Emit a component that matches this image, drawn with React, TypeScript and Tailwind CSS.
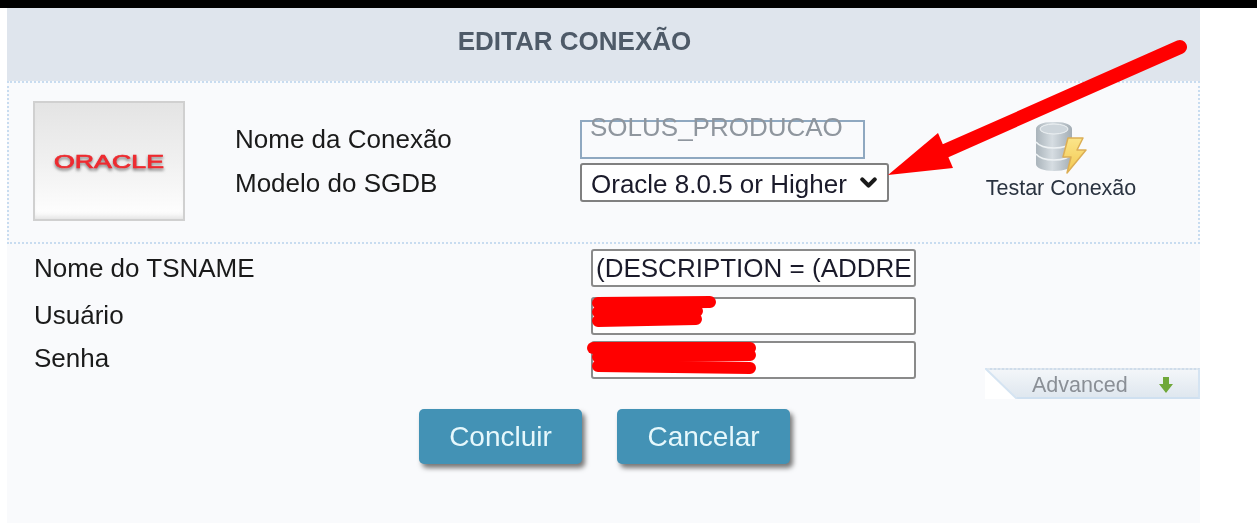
import { ChevronDown } from 'lucide-react';

const labelClass = "text-[26px] leading-[38px] text-[#1a1a1a]";
const fieldClass = "h-[38px] w-[325px] rounded-[3px] border-2 border-[#8a8a8a] bg-white px-[3px] text-[26px] text-[#1a1a2a] outline-none";

function OracleLogo() {
  return (
    <div className="flex h-[120px] w-[152px] shrink-0 items-center justify-center border-2 border-[#d0d0d0] bg-gradient-to-b from-[#e4e4e4] via-[#f0f0f0] to-white shadow-[inset_0_-6px_6px_-4px_#dddddd]">
      <svg className="mt-[4px]" width="116" height="26" viewBox="0 0 116 26">
        <defs>
          <filter id="logoShadow" x="-10%" y="-40%" width="120%" height="200%">
            <feGaussianBlur stdDeviation="1.6" />
          </filter>
        </defs>
        <text x="3" y="20" textLength="110" lengthAdjust="spacingAndGlyphs" fontFamily="'Liberation Sans', sans-serif" fontSize="19" fontWeight="400" stroke="#888888" strokeWidth="1" fill="#888888" filter="url(#logoShadow)">ORACLE</text>
        <text x="3" y="18" textLength="110" lengthAdjust="spacingAndGlyphs" fontFamily="'Liberation Sans', sans-serif" fontSize="19" fontWeight="400" stroke="#ee2b30" strokeWidth="0.7" fill="#ee2b30">ORACLE</text>
      </svg>
    </div>
  );
}

function DbIcon() {
  return (
    <svg width="54" height="54" viewBox="0 0 54 54">
      <defs>
        <linearGradient id="dbBody" x1="0" x2="1" y1="0" y2="0">
          <stop offset="0" stopColor="#aab4bb" />
          <stop offset="0.45" stopColor="#d6dde2" />
          <stop offset="1" stopColor="#a3adb5" />
        </linearGradient>
        <linearGradient id="bolt" x1="0" x2="0" y1="0" y2="1">
          <stop offset="0" stopColor="#fbe58a" />
          <stop offset="1" stopColor="#f3c850" />
        </linearGradient>
      </defs>
      <path d="M2 8c0-4 7-7 15-7h6c8 0 15 3 15 7v35c0 4-7 7-18 7S2 47 2 43z" fill="url(#dbBody)" />
      <ellipse cx="20" cy="8" rx="14" ry="5" fill="#cdd5db" stroke="#eef2f4" strokeWidth="1" />
      <path d="M2 21c4 5 11 6 18 6s14-1 18-6" fill="none" stroke="#eef2f4" strokeWidth="1.5" />
      <path d="M2 33c4 5 11 6 18 6s14-1 18-6" fill="none" stroke="#eef2f4" strokeWidth="1.5" />
      <path d="M34 17h15l-6 12h9L33 52l4-16h-8z" fill="url(#bolt)" stroke="#dcae55" strokeWidth="1.5" strokeLinejoin="round" />
    </svg>
  );
}

function AdvancedTab() {
  return (
    <div className="relative mt-[124px] h-[31px] w-[215px] bg-white">
      <div className="flex h-full items-center gap-[30px] border-t-2 border-r-2 border-b-2 border-r-[#d5e4f2] border-b-[#cfe0f0] border-t-[#cfdcea] border-dotted [border-right-style:solid] [border-bottom-style:solid] bg-gradient-to-b from-[#f3f6f9] to-[#dfe7ef] pt-[3px] pl-[47px] text-[21.5px] text-[#8a8f96] [clip-path:polygon(0_0,100%_0,100%_100%,32px_100%)]">
        <span>Advanced</span>
        <svg width="16" height="18" viewBox="0 0 16 18">
          <path d="M5 1h6v7h4l-7 9-7-9h4z" fill="#6fa83a" />
        </svg>
      </div>
      <svg className="absolute top-0 left-0" width="34" height="31" viewBox="0 0 34 31">
        <path d="M0 0L32 31" stroke="#d5e4f2" strokeWidth="2" />
      </svg>
    </div>
  );
}

export default function App() {
  return (
    <div className="relative h-[523px] w-[1257px] overflow-hidden bg-white font-['Liberation_Sans',Arial,sans-serif] blur-[0.5px]">
      <div className="h-2 bg-black" />
      <div className="ml-[7px] h-[515px] w-[1193px] bg-[#f9fafc]">
        <div className="flex h-[73px] items-center justify-center bg-[#dfe5ed] pr-[58px] pb-[6px] text-[26px] font-bold text-[#4e5a68]">
          EDITAR CONEXÃO
        </div>

        <div className="flex h-[163px] items-start border-2 border-dotted border-[#c8dcf0] pt-[18px] pl-[24px]">
          <OracleLogo />
          <div className="mt-[19px] ml-[50px] flex w-[345px] shrink-0 flex-col gap-[6px]">
            <span className={labelClass}>Nome da Conexão</span>
            <span className={labelClass}>Modelo do SGDB</span>
          </div>
          <div className="mt-[19px] flex w-[309px] shrink-0 flex-col gap-[4px]">
            <div className="h-[39px] w-[285px] border-2 border-[#8fa8c0] px-[8px]">
              <span className="-mt-[10px] block text-[26px] leading-[30px] text-[#8f969e]">SOLUS_PRODUCAO</span>
            </div>
            <div className="relative h-[39px] w-[309px]">
              <select defaultValue="oracle" className="h-full w-full appearance-none rounded-[3px] border-2 border-[#808080] bg-white pl-[9px] text-[26px] text-[#1a1a2a] outline-none">
                <option value="oracle">Oracle 8.0.5 or Higher</option>
              </select>
              <ChevronDown className="absolute top-[7px] right-[8px] h-[25px] w-[25px] text-[#1a1a1a]" strokeWidth={4} />
            </div>
          </div>
          <div className="mt-[20px] ml-[96px] flex w-[152px] shrink-0 flex-col items-center">
            <DbIcon />
            <span className="mt-[1px] text-[21.5px] leading-[24px] whitespace-nowrap text-[#2a3340]">Testar Conexão</span>
          </div>
        </div>

        <div className="flex">
          <div className="flex w-[584px] shrink-0 flex-col pt-[5px] pl-[27px]">
            <span className={labelClass}>Nome do TSNAME</span>
            <span className={`${labelClass} mt-[9px]`}>Usuário</span>
            <span className={`${labelClass} mt-[5px]`}>Senha</span>
          </div>
          <div className="flex w-[394px] shrink-0 flex-col pt-[5px]">
            <input className={fieldClass} defaultValue="(DESCRIPTION = (ADDRE" readOnly />
            <input className={`${fieldClass} mt-[10px]`} readOnly />
            <input className={`${fieldClass} mt-[6px]`} readOnly />
          </div>
          <AdvancedTab />
        </div>

        <div className="-mt-[130px] flex gap-[35px] pt-[140px] pl-[412px]">
          <button className="h-[55px] w-[163px] rounded-[5px] bg-[#4392b5] text-[28px] text-[#e6f8fc] shadow-[3px_4px_5px_#777777]">Concluir</button>
          <button className="h-[55px] w-[173px] rounded-[5px] bg-[#4392b5] text-[28px] text-[#e6f8fc] shadow-[3px_4px_5px_#777777]">Cancelar</button>
        </div>
      </div>

      {/* red marks painted over the screenshot */}
      <svg className="absolute top-0 left-0" width="1257" height="523" viewBox="0 0 1257 523">
        <path d="M1180 47L945 151" stroke="#ff0000" strokeWidth="14" strokeLinecap="round" />
        <path d="M888 175L938 133L953 168z" fill="#ff0000" />
        <g stroke="#ff0000" strokeWidth="12" strokeLinecap="round" fill="none">
          <path d="M598 303L710 302" />
          <path d="M598 312L697 311" />
          <path d="M598 321L696 319" />
          <path d="M593 348L750 348" />
          <path d="M598 357L750 355" />
          <path d="M598 366L750 368" />
        </g>
      </svg>
    </div>
  );
}
